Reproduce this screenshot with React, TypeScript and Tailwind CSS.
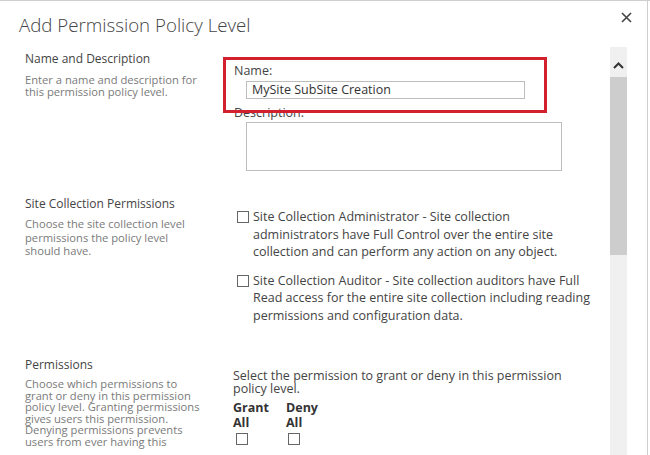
import React from 'react';

function CloseIcon() {
  return (
    <svg width="11" height="11" viewBox="0 0 11 11" className="block">
      <path d="M1 1 L10 10 M10 1 L1 10" stroke="#444" strokeWidth="1.6" fill="none" />
    </svg>
  );
}

function UpChevron() {
  return (
    <svg width="11" height="7" viewBox="0 0 11 7" className="block">
      <path d="M1 6 L5.5 1.5 L10 6" stroke="#333" strokeWidth="2" fill="none" />
    </svg>
  );
}

function Box({ className = '' }: { className?: string }) {
  return <span className={`block w-[12px] h-[12px] border border-[#666] bg-white shrink-0 ${className}`} />;
}

function Lines({ lines }: { lines: string[] }) {
  return (
    <>
      {lines.map((l) => (
        <span key={l} className="block whitespace-nowrap">
          {l}
        </span>
      ))}
    </>
  );
}

function CheckItem({ lines, className = '' }: { lines: string[]; className?: string }) {
  return (
    <div className={`flex items-start ${className}`}>
      <Box className="ml-[4px] mt-[3px]" />
      <p className="ml-[4px] text-[12.5px] leading-[17.5px] text-[#444]">
        <Lines lines={lines} />
      </p>
    </div>
  );
}

const heading = 'text-[12px] leading-[16px] text-[#444]';
const desc = 'text-[11.2px] text-[#7a7a7a]';

export default function App() {
  return (
    <div className="w-[650px] h-[455px] bg-white overflow-hidden border-t border-[#cfcfcf] font-['Open_Sans',sans-serif]">
      <div className="h-full w-[648px] border-r border-[#cfcfcf] flex flex-col">
        {/* header */}
        <div className="h-[46px] shrink-0 flex items-start justify-between pl-[19px] pr-[15px]">
          <h1 className="mt-[12px] text-[18.7px] leading-[24px] font-light text-[#444]">Add Permission Policy Level</h1>
          <button className="mt-[11px]">
            <CloseIcon />
          </button>
        </div>

        {/* body */}
        <div className="flex flex-1 min-h-0">
          <div className="w-[610px] overflow-hidden">
            {/* Name and Description */}
            <section className="flex items-start">
              <div className="w-[233px] shrink-0 pl-[25px] pt-[4px]">
                <h2 className={heading}>Name and Description</h2>
                <p className={`${desc} mt-[7px] leading-[12px]`}>
                  <Lines lines={['Enter a name and description for', 'this permission policy level.']} />
                </p>
              </div>
              <div className="relative pt-[16px]">
                <label className="block pl-[1px] text-[12.5px] leading-[16px] text-[#444]">Name:</label>
                <div className="ml-[13px] mt-[2px] w-[279px] h-[18px] border border-[#bdbdbd] pl-[5px] text-[12.5px] leading-[16px] text-[#333]">
                  MySite SubSite Creation
                </div>
                <label className="block mt-[6px] pl-[1px] text-[12.5px] leading-[16px] text-[#444]">Description:</label>
                <div className="ml-[13px] mt-[1px] w-[316px] h-[49px] border border-[#bdbdbd]" />
                <div className="absolute left-[-10px] top-[10px] w-[324px] h-[56px] border-[3px] border-[#d3202f]" />
              </div>
            </section>

            {/* Site Collection Permissions */}
            <section className="flex items-start mt-[25px]">
              <div className="w-[233px] shrink-0 pl-[25px]">
                <h2 className={heading}>Site Collection Permissions</h2>
                <p className={`${desc} mt-[5px] leading-[13.5px]`}>
                  <Lines lines={['Choose the site collection level', 'permissions the policy level', 'should have.']} />
                </p>
              </div>
              <div className="pt-[12px]">
                <CheckItem
                  lines={[
                    'Site Collection Administrator - Site collection',
                    'administrators have Full Control over the entire site',
                    'collection and can perform any action on any object.',
                  ]}
                />
                <CheckItem
                  className="mt-[11px]"
                  lines={[
                    'Site Collection Auditor - Site collection auditors have Full',
                    'Read access for the entire site collection including reading',
                    'permissions and configuration data.',
                  ]}
                />
              </div>
            </section>

            {/* Permissions */}
            <section className="flex items-start mt-[33px]">
              <div className="w-[233px] shrink-0 pl-[25px]">
                <h2 className={heading}>Permissions</h2>
                <p className={`${desc} mt-[5px] leading-[11.5px]`}>
                  <Lines
                    lines={[
                      'Choose which permissions to',
                      'grant or deny in this permission',
                      'policy level. Granting permissions',
                      'gives users this permission.',
                      'Denying permissions prevents',
                      'users from ever having this',
                    ]}
                  />
                </p>
              </div>
              <div className="pt-[12px]">
                <p className="text-[12.5px] leading-[13px] text-[#444]">
                  <Lines lines={['Select the permission to grant or deny in this permission', 'policy level.']} />
                </p>
                <div className="flex mt-[5px]">
                  <div className="w-[53px]">
                    <span className="block text-[12.5px] leading-[15px] font-bold text-[#333]">Grant</span>
                    <span className="block text-[12.5px] leading-[15px] font-bold text-[#333]">All</span>
                    <Box className="ml-[3px] mt-[3px]" />
                  </div>
                  <div className="w-[53px]">
                    <span className="block text-[12.5px] leading-[15px] font-bold text-[#333]">Deny</span>
                    <span className="block text-[12.5px] leading-[15px] font-bold text-[#333]">All</span>
                    <Box className="ml-[2px] mt-[3px]" />
                  </div>
                </div>
              </div>
            </section>
          </div>

          {/* scrollbar */}
          <div className="w-[17px] shrink-0 flex flex-col bg-[#f0f0f0]">
            <div className="h-[30px] flex items-center justify-center pt-[6px]">
              <UpChevron />
            </div>
            <div className="h-[178px] bg-[#cdcdcd]" />
          </div>
          <div className="flex-1" />
        </div>
      </div>
    </div>
  );
}
